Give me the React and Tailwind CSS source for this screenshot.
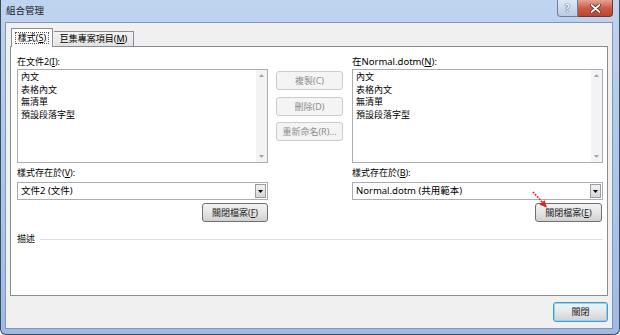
import React from 'react';

const font = "font-['Noto_Sans','Noto_Sans_CJK_TC',sans-serif]";

function ListBox({ items }) {
  return (
    <div className="flex h-[94px] border border-[#abadb3] bg-white">
      <div className="flex-1 pl-[3px] pt-[1px] text-[9px] leading-[12.5px] text-black">
        {items.map((t) => (
          <div key={t}>{t}</div>
        ))}
      </div>
      <div className="flex w-[11px] flex-col items-center justify-between bg-[#f3f3f3] py-[4px]">
        <svg width="5" height="3" viewBox="0 0 5 3"><path d="M0 3 L2.5 0 L5 3Z" fill="#a3a3a3" /></svg>
        <svg width="5" height="3" viewBox="0 0 5 3"><path d="M0 0 L2.5 3 L5 0Z" fill="#a3a3a3" /></svg>
      </div>
    </div>
  );
}

function Combo({ value }) {
  return (
    <div className="flex h-[18px] border border-[#abadb3] bg-white">
      <div className="flex flex-1 items-center pl-[3px] text-[9.5px] text-black">{value}</div>
      <div className="m-[1px] flex w-[11px] items-center justify-center border border-[#9c9c9c] bg-gradient-to-b from-[#f2f2f2] to-[#d6d6d6]">
        <svg width="5" height="3" viewBox="0 0 5 3"><path d="M0 0 L2.5 3 L5 0Z" fill="#000" /></svg>
      </div>
    </div>
  );
}

function Btn({ children, className = '', disabled = false, def = false }) {
  return (
    <div
      className={
        'flex h-[19px] items-center justify-center rounded-[3px] border text-[9px] ' +
        (disabled
          ? 'border-[#c9cbcd] bg-[#f4f4f4] text-[#8d8d8d] '
          : def
          ? 'border-[#3c9ed6] bg-gradient-to-b from-[#eaf6fd] via-[#e6e6e6] to-[#d2d2d2] text-[#222] shadow-[inset_0_0_0_1px_#8ad4f6] '
          : 'border-[#707070] bg-gradient-to-b from-[#f3f3f3] via-[#e5e5e5] to-[#d0d0d0] text-[#222] ') +
        className
      }
    >
      {children}
    </div>
  );
}

const items = ['內文', '表格內文', '無清單', '預設段落字型'];

export default function App() {
  return (
    <div className={`relative flex h-[335px] w-[620px] flex-col overflow-hidden rounded-b-[6px] border-x border-b border-[#3d4b62] bg-gradient-to-b from-[#bed4ef] via-[#adc7e9] to-[#9fbbe3] ${font}`}>
      {/* title bar */}
      <div className="flex h-[22px] items-start">
        <div className="pl-[5px] pt-[5px] text-[9.5px] leading-[12px] text-[#1e1e1e]">組合管理</div>
        <div className="ml-auto mr-[6px] flex">
          <div className="flex h-[17px] w-[21px] items-center justify-center rounded-bl-[4px] border border-t-0 border-[#6b7f9e] bg-gradient-to-b from-[#dfe8f4] to-[#b9cbe4] text-[10px] font-bold leading-none text-white [text-shadow:0_0_1px_#304060,0_0_1px_#304060]">
            ?
          </div>
          <div className="flex h-[17px] w-[35px] items-center justify-center rounded-br-[4px] border border-l-0 border-t-0 border-[#6b3a36] bg-gradient-to-b from-[#e4a394] via-[#cf5a44] to-[#c4412b]">
            <svg width="11" height="9" viewBox="0 0 11 9">
              <path d="M1.5 1 L9.5 8 M9.5 1 L1.5 8" stroke="#4a1d18" strokeWidth="3.2" strokeLinecap="round" />
              <path d="M1.5 1 L9.5 8 M9.5 1 L1.5 8" stroke="#fff" strokeWidth="1.8" strokeLinecap="round" />
            </svg>
          </div>
        </div>
      </div>

      {/* client area */}
      <div className="mb-[5px] ml-[4px] mr-[6px] flex flex-1 flex-col border border-[#8196b6] bg-[#f0f0f0] px-[4px] pt-[5px]">
        {/* tabs */}
        <div className="flex h-[18px] items-end pl-[1px]">
          <div className="relative z-10 -mb-px flex h-[19px] w-[42px] items-center justify-center border border-b-0 border-[#898c95] bg-white">
            <span className="border border-dotted border-[#555] px-[2px] text-[9px] leading-[10px] text-black">
              樣式(<span className="underline">S</span>)
            </span>
          </div>
          <div className="ml-[1px] flex h-[15px] w-[80px] items-center justify-center border border-b-0 border-l-0 border-[#898c95] bg-gradient-to-b from-[#f2f2f2] to-[#e3e3e3] text-[9px] text-black">
            巨集專案項目(<span className="underline">M</span>)
          </div>
        </div>

        {/* panel */}
        <div className="flex h-[250px] flex-col border border-[#898c95] bg-white pl-[6px] pr-[4px] pt-[9px]">
          <div className="flex">
            {/* left */}
            <div className="flex w-[251px] flex-col">
              <div className="h-[13px] text-[9px] leading-[12px] text-black">
                在文件2(<span className="underline">I</span>):
              </div>
              <ListBox items={items} />
              <div className="flex h-[19px] items-center text-[9px] text-black">
                樣式存在於(<span className="underline">V</span>):
              </div>
              <Combo value="文件2 (文件)" />
              <Btn className="mt-[3px] w-[66px] self-end">
                關閉檔案(<span className="underline">F</span>)
              </Btn>
            </div>

            {/* middle */}
            <div className="ml-[8px] mt-[15px] flex w-[67px] flex-col gap-[6px]">
              <Btn disabled className="h-[18px]">複製(C)</Btn>
              <Btn disabled className="mt-[1px] h-[18px]">刪除(D)</Btn>
              <Btn disabled className="h-[18px]">重新命名(R)...</Btn>
            </div>

            {/* right */}
            <div className="ml-[9px] flex w-[251px] flex-col">
              <div className="h-[13px] text-[9.5px] leading-[12px] text-black">
                在Normal.dotm(<span className="underline">N</span>):
              </div>
              <ListBox items={items} />
              <div className="flex h-[19px] items-center text-[9px] text-black">
                樣式存在於(<span className="underline">B</span>):
              </div>
              <Combo value="Normal.dotm (共用範本)" />
              <Btn className="mr-[1px] mt-[3px] w-[67px] self-end">
                關閉檔案(<span className="underline">E</span>)
              </Btn>
            </div>
          </div>

          <div className="mt-[11px] flex items-center">
            <span className="text-[9px] leading-[12px] text-black">描述</span>
            <div className="ml-[5px] h-px flex-1 bg-[#d5dfe5]" />
          </div>
        </div>

        {/* bottom buttons */}
        <div className="mt-[6px] flex justify-end">
          <Btn def className="h-[20px] w-[55px]">關閉</Btn>
        </div>
      </div>

      {/* red annotation arrow */}
      <svg className="absolute left-[528px] top-[188px]" width="22" height="24" viewBox="0 0 22 24">
        <path d="M4 4 L13.5 14.5" stroke="#e8201c" strokeWidth="1.8" strokeDasharray="1.6 1.4" fill="none" />
        <path d="M18 19.5 L10.5 16.8 L15.6 12.2 Z" fill="#e8201c" />
      </svg>
    </div>
  );
}
